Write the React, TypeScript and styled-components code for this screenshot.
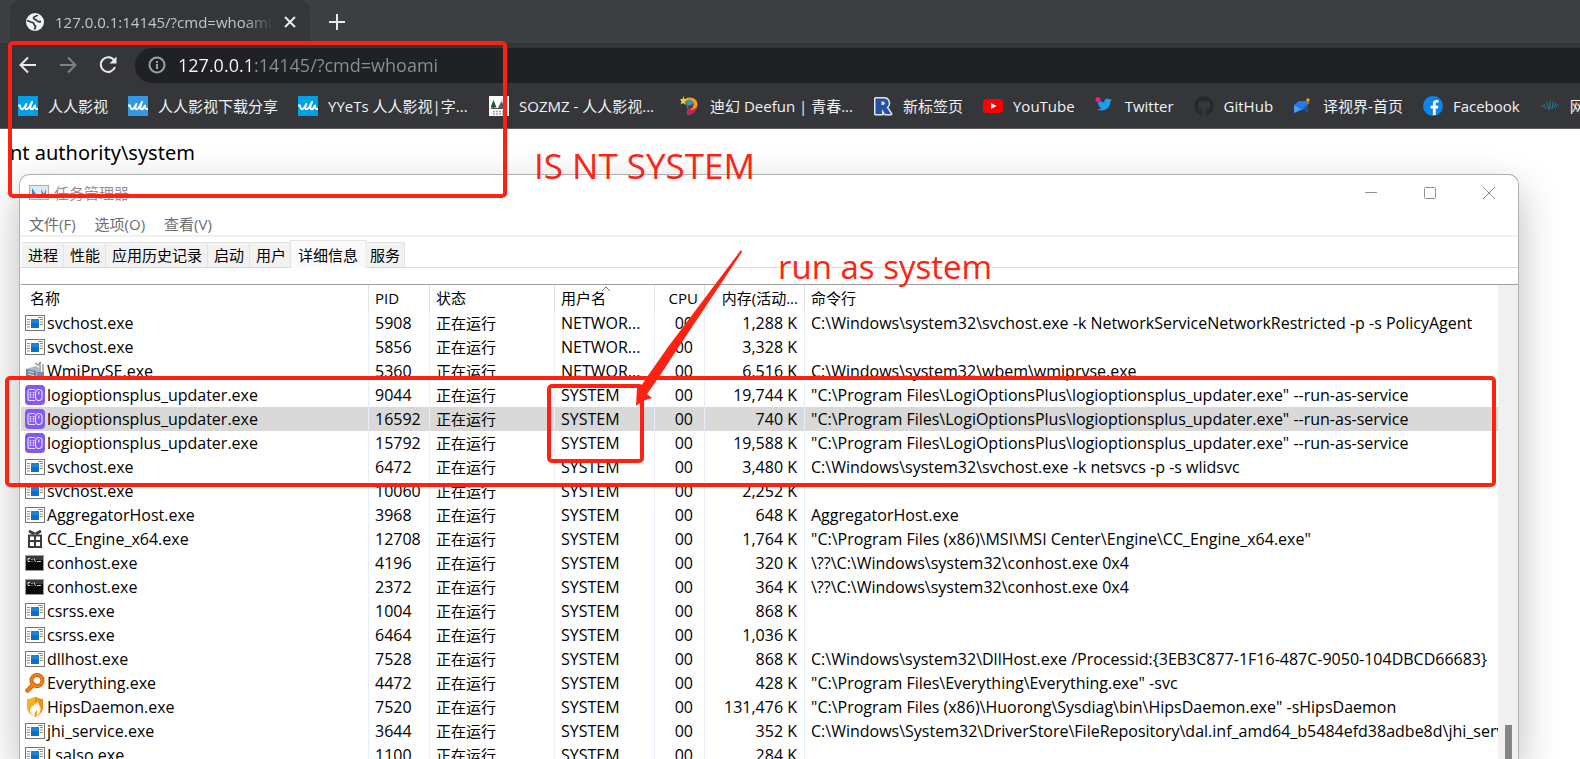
import React from "react";
import styled, { createGlobalStyle, css } from "styled-components";
import { FaTwitter, FaGithub, FaFacebookF } from "react-icons/fa";

const UI_FONT = `"Open Sans", "Noto Sans CJK SC", sans-serif`;
const RED = "#ff2213";

const GlobalStyle = createGlobalStyle`
  * { box-sizing: border-box; }
  body { margin: 0; background: #fff; }
  button, input { font: inherit; color: inherit; border: 0; padding: 0; margin: 0; background: none; }
  svg { display: block; flex: none; }
`;

const Screen = styled.div`
  position: relative;
  height: 100vh;
  display: flex;
  flex-direction: column;
  overflow: hidden;
  background: #fff;
  color: #000;
  font-family: ${UI_FONT};
  font-size: 15px;
  line-height: 24px;
`;

/* ---------- browser chrome ---------- */

const TabStrip = styled.div`
  flex: none;
  display: flex;
  align-items: center;
  height: 43px;
  padding-left: 10px;
  background: #3c4043;
`;

const BrowserTab = styled.div`
  display: flex;
  align-items: center;
  width: 300px;
  height: 43px;
  padding: 0 14px 0 15px;
  border-radius: 10px 10px 0 0;
  background: #35363a;
  color: #c3c6ca;
`;

const TabTitle = styled.span`
  flex: 1;
  margin: 0 10px;
  overflow: hidden;
  white-space: nowrap;
  mask-image: linear-gradient(to right, #000 86%, transparent);
`;

const IconButton = styled.button<{ $color?: string }>`
  display: flex;
  align-items: center;
  justify-content: center;
  color: ${(p) => p.$color ?? "#e8eaed"};
`;

const NewTab = styled(IconButton)`
  width: 28px;
  height: 28px;
  margin-left: 13px;
`;

const Toolbar = styled.div`
  flex: none;
  display: flex;
  align-items: center;
  gap: 20px;
  height: 44px;
  padding-left: 18px;
  background: #35363a;
`;

const Omnibox = styled.label`
  flex: 1;
  display: flex;
  align-items: center;
  gap: 12px;
  height: 35px;
  margin-left: -3px;
  padding-left: 13px;
  border-radius: 18px 0 0 18px;
  background: #202124;
  color: #9aa0a6;
`;

const Address = styled.input`
  flex: 1;
  min-width: 0;
  height: 28px;
  outline: none;
  font-size: 18px;
  color: #8b9095;
  background: linear-gradient(to right, #fff 74px, #8b9095 74px);
  background-clip: text;
  -webkit-text-fill-color: transparent;
`;

const BookmarkBar = styled.nav`
  flex: none;
  display: flex;
  align-items: center;
  gap: 20px;
  height: 42px;
  padding: 0 0 4px 18px;
  overflow: hidden;
  border-bottom: 1px solid #5c5e62;
  background: #35363a;
`;

const Bookmark = styled.a`
  flex: none;
  display: flex;
  align-items: center;
  gap: 10px;
  color: #f1f3f4;
  text-decoration: none;
  white-space: nowrap;
`;

const BookmarkLabel = styled.span<{ $elided?: boolean }>`
  min-width: ${(p) => (p.$elided ? 141 : 0)}px;
`;

const PageBody = styled.main`
  flex: 1;
  min-height: 0;
  display: flex;
  flex-direction: column;
  padding: 10px 61px 0 19px;
`;

const Output = styled.pre`
  flex: none;
  height: 35px;
  margin: 0 0 0 -9px;
  font-family: "Noto Sans", sans-serif;
  font-size: 20px;
  line-height: 28px;
`;

/* ---------- task manager ---------- */

const Window = styled.section`
  flex: 1;
  min-height: 0;
  display: flex;
  flex-direction: column;
  border: 1px solid #b0b0b0;
  border-bottom: 0;
  border-radius: 10px 10px 0 0;
  background: #fff;
  box-shadow: 0 16px 40px rgba(0, 0, 0, 0.27);
`;

const TitleBar = styled.header`
  flex: none;
  display: flex;
  align-items: center;
  height: 36px;
  padding-left: 9px;
  color: #8f8f8f;
`;

const Title = styled.h1`
  flex: 1;
  margin: 0 0 0 5px;
  font-size: 15px;
  font-weight: 400;
`;

const WindowButton = styled(IconButton)`
  width: 59px;
  height: 36px;
`;

const MenuBar = styled.div`
  flex: none;
  display: flex;
  gap: 19px;
  height: 26px;
  padding: 1px 0 0 9px;
  border-bottom: 2px solid #f0f0f0;
  color: #6d6d6d;
`;

const MenuItem = styled.button`
  height: 24px;
`;

const Tabs = styled.div`
  flex: none;
  display: flex;
  align-items: flex-end;
  height: 31px;
  padding-left: 2px;
  border-bottom: 1px solid #dcdcdc;
`;

const Tab = styled.button<{ $active?: boolean }>`
  height: 25px;
  padding: 0 5px 0 6px;
  border-top: 1px solid #e3e3e3;
  border-right: 1px solid #e3e3e3;
  background: #f2f2f2;
  line-height: 24px;
  &:last-child { padding: 0 4px 0 5px; }
  ${(p) =>
    p.$active &&
    css`
      height: 28px;
      margin: 0 -2px -1px;
      padding: 0 8px 0 7px;
      border-left: 1px solid #e3e3e3;
      background: #fafafa;
      line-height: 24px;
    `}
`;

const ListArea = styled.div`
  flex: 1;
  min-height: 0;
  display: flex;
  margin: 16px 0 0 1px;
  border-top: 1px solid #a0a0a0;
`;

const ListView = styled.div`
  flex: 1;
  min-width: 0;
  overflow: hidden;
`;

const ScrollTrack = styled.div`
  flex: none;
  width: 20px;
  padding: 440px 6px 0 7px;
  overflow: hidden;
  background: #f0f0f0;
`;

const ScrollThumb = styled.div`
  height: 60px;
  background: #858585;
`;

const Table = styled.table`
  width: 100%;
  table-layout: fixed;
  border-collapse: separate;
  border-spacing: 0;
`;

const HeadCell = styled.th<{ $right?: boolean }>`
  position: relative;
  height: 26px;
  padding: 0 6px;
  overflow: hidden;
  border-right: 1px solid #e2e2e2;
  font-weight: 400;
  text-align: ${(p) => (p.$right ? "right" : "left")};
  white-space: nowrap;
  &:first-child { padding-left: 9px; }
  &:last-child { border-right: 0; }
`;

const SortMark = styled.svg`
  position: absolute;
  top: 1px;
  left: 46px;
`;

const Row = styled.tr<{ $selected?: boolean }>`
  background: ${(p) => (p.$selected ? "#d9d9d9" : "transparent")};
`;

const Cell = styled.td<{ $right?: boolean; $pad?: number; $cjk?: boolean }>`
  height: 24px;
  padding: 0 ${(p) => p.$pad ?? 0}px 0 6px;
  overflow: hidden;
  border-right: 1px solid #e4effa;
  font-size: ${(p) => (p.$cjk ? 15 : 16)}px;
  text-align: ${(p) => (p.$right ? "right" : "left")};
  white-space: nowrap;
  &:first-child { padding-left: 4px; }
  &:last-child { border-right: 0; }
`;

const NameBox = styled.span`
  display: flex;
  align-items: center;
  gap: 2px;
`;

/* ---------- annotations ---------- */

const Frame = styled.div<{ $x: number; $y: number; $w: number; $h: number }>`
  position: absolute;
  left: ${(p) => p.$x}px;
  top: ${(p) => p.$y}px;
  width: ${(p) => p.$w}px;
  height: ${(p) => p.$h}px;
  border: 4px solid ${RED};
  border-radius: 5px;
  pointer-events: none;
`;

const Note = styled.span<{ $x: number; $y: number; $size: number }>`
  position: absolute;
  left: ${(p) => p.$x}px;
  top: ${(p) => p.$y}px;
  color: ${RED};
  font-size: ${(p) => p.$size}px;
  line-height: 48px;
  white-space: nowrap;
`;

const Arrow = styled.svg`
  position: absolute;
  left: 630px;
  top: 248px;
`;

/* ---------- icons ---------- */

const Globe = () => (
  <svg width="20" height="20" viewBox="0 0 20 20">
    <circle cx="10" cy="10" r="9" fill="#f1f3f4" />
    <path d="M2 8.500l4 1.500c1.500.5 3 .3 3 2 0 1.500 1.500 1 1.500 2.500 0 1-.5 1.500-1 3" fill="none" stroke="#35363a" strokeWidth="1.800" />
    <path d="M12.500 3c-.5 1.500-3.500 1-4 2.800-.4 1.700 2.500 1.200 3.200 2.700.6 1.400 2 1.500 4.300 1" fill="none" stroke="#35363a" strokeWidth="1.800" />
  </svg>
);

const Wave = ({ bg }: { bg: string }) => (
  <svg width="20" height="20" viewBox="0 0 20 20">
    <rect width="20" height="20" fill={bg} />
    <path d="M0 9.500h2c.6 2 .2 3.800 1.800 3.800 2 0 3.200-3 4.600-5.300-1.200 2.300-1.800 5.300.2 5.300 2 0 3.600-4 5.400-7.300-1.600 3.300-2.400 7.300-.4 7.300 1.800 0 2.600-2.300 3.400-3.800-.4 2.300.2 3.600 3 3.600" fill="none" stroke="#fff" strokeWidth="2" strokeLinejoin="round" />
  </svg>
);

const Camp = () => (
  <svg width="20" height="20" viewBox="0 0 20 20">
    <rect width="20" height="20" fill="#fdfdfd" />
    <path d="M4.500 4l3 7.500h-6z" fill="#1e5a2c" />
    <path d="M4.500 10v3" stroke="#333" />
    <path d="M12.500 5l3.500 7h-7z" fill="#3c5a86" />
    <path d="M12.500 8l1.500 4h-3z" fill="#b23b32" />
    <circle cx="15.500" cy="4" r="2" fill="#d8cfa0" />
    <path d="M15.500 0v8M11.500 4h8M12.800 1.300l5.400 5.400M18.200 1.300l-5.400 5.400" stroke="#c9c3a8" strokeWidth=".6" />
    <path d="M2 12.500h16" stroke="#555" />
    <path d="M4 15.500h12M4 18h12" stroke="#a0a0a0" strokeWidth="1.500" strokeDasharray="2 1" />
  </svg>
);

const Deefun = () => (
  <svg width="20" height="20" viewBox="0 0 20 20">
    <path d="M6 2c6-2 12 1 11.500 7C17 14 13 18 8 19c-2-2-1-4 0-5z" fill="#f59a1b" />
    <path d="M8 14c4 0 8-1 9-4-.5 5-4 8-9 9-2-2-1-4 0-5z" fill="#c2255c" />
    <path d="M7 4c4-1 7 1 6.500 4S10 12.500 8 13C6 10 6 7 7 4z" fill="#2a9db5" />
    <path d="M7.500 9c2 1 4.500 0 5.500-2.500 1.500 3.500-1 7-4.500 7.500z" fill="#7b2d3a" />
    <path d="M3.500 0l1 3L8 3.500 5.200 5.600 6 9 3.200 7 .6 8.500 1.500 5.300 0 3l2.600-.1z" fill="#f4d03c" />
  </svg>
);

const Registered = () => (
  <svg width="20" height="20" viewBox="0 0 20 20">
    <path d="M2.500 2.500H11a4.700 4.700 0 0 1 2.500 8.700L18 18h-6l-3-5v5H2.500z" fill="#2850a4" stroke="#dde5f3" strokeWidth="3" strokeLinejoin="round" paintOrder="stroke" />
    <path d="M8.500 5.500V9H10a1.700 1.700 0 0 0 0-3.500z" fill="#dde5f3" />
  </svg>
);

const YouTube = () => (
  <svg width="20" height="20" viewBox="0 0 20 20">
    <rect y="3" width="20" height="14" rx="4" fill="#f00" />
    <path d="M8 7l5.500 3L8 13z" fill="#fff" />
  </svg>
);

const Twitter = () => (
  <svg width="20" height="20" viewBox="0 0 20 20">
    <FaTwitter x="2" y="1" width="17" height="18" color="#1d9bf0" />
    <circle cx="3" cy="3.500" r="2.500" fill="#f91880" />
  </svg>
);

const Facebook = () => (
  <svg width="20" height="20" viewBox="0 0 20 20">
    <circle cx="10" cy="10" r="10" fill="#0c86ee" />
    <FaFacebookF x="4" y="4" width="12" height="16" color="#fff" />
  </svg>
);

const Translate = () => (
  <svg width="20" height="20" viewBox="0 0 20 20">
    <path d="M1 9l5-4h9v12l-4-3.500L1 17z" fill="#2478ea" />
    <path d="M1 9v8l7-4z" fill="#4f9cf5" />
    <path d="M15 8v9l-5-4z" fill="#1d4f9f" />
    <circle cx="15" cy="4" r="1.800" fill="#f0a020" />
    <circle cx="15" cy="7" r="1.300" fill="#a8741d" />
  </svg>
);

const Shell = () => (
  <svg width="20" height="20" viewBox="0 0 20 20" fill="none" stroke="#2b7b9b">
    <path d="M1 9l3 2M4 8l2 5M7 6l2 8M10 5l0 8M13 6l-1 7M16 7l-2 5M18.500 8l-2.500 3" />
  </svg>
);

const TaskIcon = () => (
  <svg width="20" height="20" viewBox="0 0 20 20">
    <rect x=".5" y="2.500" width="19" height="14" fill="#dfe9f2" stroke="#a3b1bd" />
    <path d="M3 14V5l6 9zM12 6l3 5 2-5v8h-4z" fill="#2d8fd8" />
  </svg>
);

const ExeIcon = () => (
  <svg width="20" height="20" viewBox="0 0 20 20">
    <rect x=".5" y="2.500" width="19" height="15" fill="#fff" stroke="#757570" />
    <path d="M2 6.500h3M2 9h3M2 11.500h3M2 14h3M15 6.500h3M15 9h3M15 11.500h3M13 4.500h5" stroke="#8d8d88" />
    <rect x="6" y="6" width="8" height="9" fill="#0f6fc4" />
    <rect x="6" y="6" width="8" height="4" fill="#1a83da" />
  </svg>
);

const LogiIcon = () => (
  <svg width="20" height="20" viewBox="0 0 20 20">
    <rect width="20" height="20" rx="4" fill="#8458f6" />
    <g fill="none" stroke="#e9e0ff" strokeWidth="1.200">
      <path d="M10 4.500H5a2 2 0 0 0-2 2v7a2 2 0 0 0 2 2h5" />
      <path d="M5.500 7v6M8.500 7v6" strokeWidth="1.500" strokeDasharray="1.500 .8" />
      <rect x="10.500" y="4.500" width="6.500" height="11" rx="3.200" />
      <path d="M13.800 6.500v3" />
    </g>
  </svg>
);

const WmiIcon = () => (
  <svg width="20" height="20" viewBox="0 0 20 20">
    <path d="M1 8l10-3 3 2v9l-3 2-10-3z" fill="#a9b8c4" />
    <path d="M1 8l10 2v8L1 15z" fill="#6f8596" />
    <path d="M3 10.500l6 1M3 13l6 1.500" stroke="#dfe8ee" />
    <path d="M10 2l3 2 3-3M15 1v16" stroke="#9a9a9a" strokeWidth="1.500" fill="none" />
    <path d="M18 3v8" stroke="#b5b5b5" strokeWidth="2" />
    <rect x="12" y="11" width="7" height="6" fill="#6d8fc0" />
  </svg>
);

const GiftIcon = () => (
  <svg width="20" height="20" viewBox="0 0 20 20" fill="none" stroke="#3c3c3c" strokeWidth="2">
    <path d="M4 6.500h12V18H4zM10 6v12M3 12h14" />
    <path d="M4 2l5.500 3M16 2l-5.500 3" strokeWidth="3" />
  </svg>
);

const ConsoleIcon = () => (
  <svg width="20" height="20" viewBox="0 0 20 20">
    <rect x=".5" y="2.500" width="18" height="15" fill="#0a0a0a" stroke="#9b9b9b" />
    <rect x="1" y="3" width="17" height="4" fill="#3a3a3a" />
    <path d="M5 5.500H3v3h2M7 6v1M7 8v1M9 5.500l1.500 3.500M12 8.500h4" stroke="#e0e0e0" fill="none" strokeWidth=".9" />
  </svg>
);

const EverythingIcon = () => (
  <svg width="20" height="20" viewBox="0 0 20 20" fill="none">
    <path d="M2.500 17.500l6-6" stroke="#b35407" strokeWidth="4.500" strokeLinecap="round" />
    <circle cx="12" cy="7.500" r="5.500" stroke="#b35407" strokeWidth="4" />
    <circle cx="12" cy="7.500" r="5.500" stroke="#fb7d0a" strokeWidth="2.500" />
    <path d="M2.500 17.500l6-6" stroke="#fb7d0a" strokeWidth="3" strokeLinecap="round" />
  </svg>
);

const HipsIcon = () => (
  <svg width="20" height="20" viewBox="0 0 20 20">
    <path d="M2 2c5 0 6-2 8-2s3 2 8 2v8c0 5-4 8-8 10-4-2-8-5-8-10z" fill="#fbb11e" />
    <path d="M10 0c2 0 3 2 8 2v8c0 5-4 8-8 10z" fill="#f68a10" />
    <path d="M13 3c0 4-7 5-8 10 0 3 2 5 5 7-1-3 0-5 2-7 0 2 0 4-1 6 3-2 5-4 4.500-8C15 8 12.500 6 13 3z" fill="#fff8ec" />
  </svg>
);

/* ---------- data ---------- */

const bookmarks: [React.ReactNode, string][] = [
  [<Wave bg="#00a0e9" />, "人人影视"],
  [<Wave bg="#3498e8" />, "人人影视下载分享"],
  [<Wave bg="#00a0e9" />, "YYeTs 人人影视|字..."],
  [<Camp />, "SOZMZ - 人人影视..."],
  [<Deefun />, "迪幻 Deefun | 青春..."],
  [<Registered />, "新标签页"],
  [<YouTube />, "YouTube"],
  [<Twitter />, "Twitter"],
  [<FaGithub size={20} color="#24292e" />, "GitHub"],
  [<Translate />, "译视界-首页"],
  [<Facebook />, "Facebook"],
  [<Shell />, "网"],
];

const icons = {
  exe: ExeIcon,
  logi: LogiIcon,
  wmi: WmiIcon,
  gift: GiftIcon,
  con: ConsoleIcon,
  every: EverythingIcon,
  hips: HipsIcon,
};

type Process = [keyof typeof icons, string, string, string, string, string];

const LOGI_CMD = `"C:\\Program Files\\LogiOptionsPlus\\logioptionsplus_updater.exe" --run-as-service`;

const processes: Process[] = [
  ["exe", "svchost.exe", "5908", "NETWOR...", "1,288 K", "C:\\Windows\\system32\\svchost.exe -k NetworkServiceNetworkRestricted -p -s PolicyAgent"],
  ["exe", "svchost.exe", "5856", "NETWOR...", "3,328 K", ""],
  ["wmi", "WmiPrvSE.exe", "5360", "NETWOR...", "6,516 K", "C:\\Windows\\system32\\wbem\\wmiprvse.exe"],
  ["logi", "logioptionsplus_updater.exe", "9044", "SYSTEM", "19,744 K", LOGI_CMD],
  ["logi", "logioptionsplus_updater.exe", "16592", "SYSTEM", "740 K", LOGI_CMD],
  ["logi", "logioptionsplus_updater.exe", "15792", "SYSTEM", "19,588 K", LOGI_CMD],
  ["exe", "svchost.exe", "6472", "SYSTEM", "3,480 K", "C:\\Windows\\system32\\svchost.exe -k netsvcs -p -s wlidsvc"],
  ["exe", "svchost.exe", "10060", "SYSTEM", "2,252 K", ""],
  ["exe", "AggregatorHost.exe", "3968", "SYSTEM", "648 K", "AggregatorHost.exe"],
  ["gift", "CC_Engine_x64.exe", "12708", "SYSTEM", "1,764 K", `"C:\\Program Files (x86)\\MSI\\MSI Center\\Engine\\CC_Engine_x64.exe"`],
  ["con", "conhost.exe", "4196", "SYSTEM", "320 K", "\\??\\C:\\Windows\\system32\\conhost.exe 0x4"],
  ["con", "conhost.exe", "2372", "SYSTEM", "364 K", "\\??\\C:\\Windows\\system32\\conhost.exe 0x4"],
  ["exe", "csrss.exe", "1004", "SYSTEM", "868 K", ""],
  ["exe", "csrss.exe", "6464", "SYSTEM", "1,036 K", ""],
  ["exe", "dllhost.exe", "7528", "SYSTEM", "868 K", "C:\\Windows\\system32\\DllHost.exe /Processid:{3EB3C877-1F16-487C-9050-104DBCD66683}"],
  ["every", "Everything.exe", "4472", "SYSTEM", "428 K", `"C:\\Program Files\\Everything\\Everything.exe" -svc`],
  ["hips", "HipsDaemon.exe", "7520", "SYSTEM", "131,476 K", `"C:\\Program Files (x86)\\Huorong\\Sysdiag\\bin\\HipsDaemon.exe" -sHipsDaemon`],
  ["exe", "jhi_service.exe", "3644", "SYSTEM", "352 K", "C:\\Windows\\System32\\DriverStore\\FileRepository\\dal.inf_amd64_b5484efd38adbe8d\\jhi_servi"],
  ["exe", "LsaIso.exe", "1100", "SYSTEM", "284 K", ""],
];

const tabs = ["进程", "性能", "应用历史记录", "启动", "用户", "详细信息", "服务"];

const columnWidths = [348, 61, 125, 100, 50, 100];

export default function App() {
  return (
    <Screen>
      <GlobalStyle />
      <TabStrip>
        <BrowserTab>
          <Globe />
          <TabTitle>127.0.0.1:14145/?cmd=whoami</TabTitle>
          <IconButton aria-label="Close tab">
            <svg width="12" height="12" viewBox="0 0 12 12" stroke="currentColor" strokeWidth="2">
              <path d="M1 1l10 10M11 1L1 11" />
            </svg>
          </IconButton>
        </BrowserTab>
        <NewTab aria-label="New tab">
          <svg width="16" height="16" viewBox="0 0 16 16" stroke="currentColor" strokeWidth="2">
            <path d="M8 0v16M0 8h16" />
          </svg>
        </NewTab>
      </TabStrip>

      <Toolbar>
        <IconButton aria-label="Back">
          <svg width="20" height="20" viewBox="0 0 20 20" fill="none" stroke="currentColor" strokeWidth="2">
            <path d="M18 10H3M10 2.500L2.500 10l7.500 7.500" />
          </svg>
        </IconButton>
        <IconButton aria-label="Forward" $color="#7e8185">
          <svg width="20" height="20" viewBox="0 0 20 20" fill="none" stroke="currentColor" strokeWidth="2">
            <path d="M2 10h15M10 2.500l7.500 7.500-7.500 7.500" />
          </svg>
        </IconButton>
        <IconButton aria-label="Reload">
          <svg width="20" height="20" viewBox="0 0 20 20" fill="none" stroke="currentColor" strokeWidth="2">
            <path d="M16.200 5.500A7.300 7.300 0 1 0 17 12" />
            <path d="M18.500 1.500v7h-7z" fill="currentColor" stroke="none" />
          </svg>
        </IconButton>
        <Omnibox>
          <svg width="18" height="18" viewBox="0 0 18 18" fill="none" stroke="currentColor" strokeWidth="2">
            <circle cx="9" cy="9" r="7.500" />
            <path d="M9 8v5M9 5v2" />
          </svg>
          <Address aria-label="Address" defaultValue="127.0.0.1:14145/?cmd=whoami" />
        </Omnibox>
      </Toolbar>

      <BookmarkBar>
        {bookmarks.map(([icon, label]) => (
          <Bookmark key={label} href="#">
            {icon}
            <BookmarkLabel $elided={label.endsWith("...")}>{label}</BookmarkLabel>
          </Bookmark>
        ))}
      </BookmarkBar>

      <PageBody>
        <Output>nt authority\system</Output>

        <Window>
          <TitleBar>
            <TaskIcon />
            <Title>任务管理器</Title>
            <WindowButton aria-label="Minimize" $color="#8f8f8f">
              <svg width="12" height="12" viewBox="0 0 12 12" stroke="currentColor">
                <path d="M0 5.500h12" />
              </svg>
            </WindowButton>
            <WindowButton aria-label="Maximize" $color="#8f8f8f">
              <svg width="12" height="12" viewBox="0 0 12 12" fill="none" stroke="currentColor">
                <rect x=".5" y=".5" width="11" height="11" rx="1" />
              </svg>
            </WindowButton>
            <WindowButton aria-label="Close" $color="#8f8f8f">
              <svg width="12" height="12" viewBox="0 0 12 12" stroke="currentColor">
                <path d="M0 0l12 12M12 0L0 12" />
              </svg>
            </WindowButton>
          </TitleBar>

          <MenuBar>
            <MenuItem>文件(F)</MenuItem>
            <MenuItem>选项(O)</MenuItem>
            <MenuItem>查看(V)</MenuItem>
          </MenuBar>

          <Tabs role="tablist">
            {tabs.map((name) => (
              <Tab key={name} role="tab" $active={name === "详细信息"} aria-selected={name === "详细信息"}>
                {name}
              </Tab>
            ))}
          </Tabs>

          <ListArea>
            <ListView>
              <Table>
                <colgroup>
                  {columnWidths.map((w, i) => (
                    <col key={i} width={w} />
                  ))}
                  <col />
                </colgroup>
                <thead>
                  <tr>
                    <HeadCell>名称</HeadCell>
                    <HeadCell>PID</HeadCell>
                    <HeadCell>状态</HeadCell>
                    <HeadCell>
                      用户名
                      <SortMark width="10" height="6" viewBox="0 0 10 6" fill="none" stroke="#707070">
                        <path d="M1 5l4-4 4 4" />
                      </SortMark>
                    </HeadCell>
                    <HeadCell $right>CPU</HeadCell>
                    <HeadCell $right>内存(活动...</HeadCell>
                    <HeadCell>命令行</HeadCell>
                  </tr>
                </thead>
                <tbody>
                  {processes.map(([icon, name, pid, user, memory, command]) => {
                    const Icon = icons[icon];
                    return (
                      <Row key={pid} $selected={pid === "16592"}>
                        <Cell>
                          <NameBox>
                            <Icon />
                            {name}
                          </NameBox>
                        </Cell>
                        <Cell>{pid}</Cell>
                        <Cell $cjk>正在运行</Cell>
                        <Cell>{user}</Cell>
                        <Cell $right $pad={11}>00</Cell>
                        <Cell $right $pad={7}>{memory}</Cell>
                        <Cell>{command}</Cell>
                      </Row>
                    );
                  })}
                </tbody>
              </Table>
            </ListView>
            <ScrollTrack>
              <ScrollThumb />
            </ScrollTrack>
          </ListArea>
        </Window>
      </PageBody>

      <Frame $x={8} $y={41} $w={499} $h={157} />
      <Frame $x={5} $y={376} $w={1491} $h={111} />
      <Frame $x={547} $y={384} $w={97} $h={79} />
      <Arrow width="114" height="162" viewBox="0 0 114 162" fill={RED}>
        <path d="M6 158L7 140L11 138L17 129L38 99L111 2L112 4L48 100L29 129L17 146L22 150Q13 152 6 158Z" />
      </Arrow>
      <Note $x={534} $y={142} $size={35}>IS NT SYSTEM</Note>
      <Note $x={778} $y={243} $size={33}>run as system</Note>
    </Screen>
  );
}
